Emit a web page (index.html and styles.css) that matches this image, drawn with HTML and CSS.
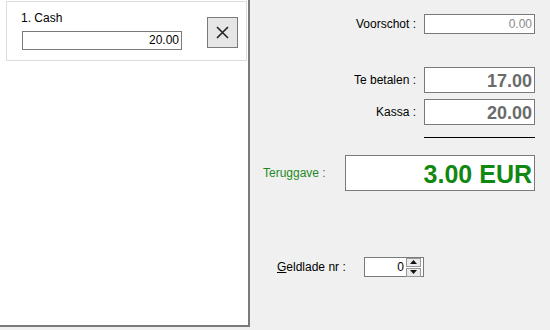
FILE: index.html
```html
<!DOCTYPE html>
<html lang="nl">
<head>
<meta charset="UTF-8">
<title>Afrekenen</title>
<link rel="stylesheet" href="styles.css">
</head>
<body>

<div class="screen">
    <div class="payments">
        <div class="pay-card">
            <div class="pay-left">
                <div class="pay-name">1. Cash</div>
                <div class="pay-amount">20.00</div>
            </div>
            <div class="pay-remove">
                <svg width="13" height="13" viewBox="0 0 13 13">
                    <path d="M1 1 L12 12 M12 1 L1 12" stroke="#222" stroke-width="1.6" fill="none"/>
                </svg>
            </div>
        </div>
    </div>

    <div class="totals">
        <div class="row row-advance">
            <span class="label">Voorschot :</span>
            <div class="box box-small">0.00</div>
        </div>
        <div class="row row-due">
            <span class="label">Te betalen :</span>
            <div class="box box-big">17.00</div>
        </div>
        <div class="row row-cash">
            <span class="label">Kassa :</span>
            <div class="box box-big">20.00</div>
        </div>
        <div class="rule"></div>
        <div class="row row-change">
            <span class="label label-green">Teruggave :</span>
            <div class="box box-change">3.00 EUR</div>
        </div>
        <div class="row row-drawer">
            <span class="label"><u>G</u>eldlade nr :</span>
            <div class="spin">
                <span class="spin-value">0</span>
                <div class="spin-buttons">
                    <div class="spin-btn">
                        <svg width="7" height="4" viewBox="0 0 7 4"><path d="M0 4 L3.5 0 L7 4 Z" fill="#111"/></svg>
                    </div>
                    <div class="spin-btn">
                        <svg width="7" height="4" viewBox="0 0 7 4"><path d="M0 0 L3.5 4 L7 0 Z" fill="#111"/></svg>
                    </div>
                </div>
            </div>
        </div>
    </div>
</div>

</body>
</html>
```

FILE: styles.css
```css
body, html {
    margin: 0;
    padding: 0;
    background: #f0f0f0;
    font-family: "Liberation Sans", Arial, sans-serif;
    font-size: 12px;
    color: #000;
}

.screen {
    display: flex;
    width: 550px;
    height: 330px;
}

.payments {
    width: 242px;
    height: 324px;
    background: #fff;
    border-right: 2px solid #7a7a7a;
    border-bottom: 2px solid #7a7a7a;
    padding: 1px 0 0 6px;
    box-sizing: content-box;
}

.pay-card {
    display: flex;
    justify-content: space-between;
    height: 58px;
    margin-right: 1px;
    border: 1px solid #dcdcdc;
    background: #fff;
    padding: 0 8px 0 14px;
}

.pay-left {
    padding-top: 9px;
}

.pay-name {
    height: 20px;
}

.pay-amount {
    width: 156px;
    height: 17px;
    line-height: 17px;
    margin-left: 1px;
    border: 1px solid #7a7a7a;
    text-align: right;
    padding-right: 2px;
}

.pay-remove {
    margin-top: 15px;
    width: 29px;
    height: 29px;
    border: 1px solid #7a7a7a;
    background: #e6e6e6;
    display: flex;
    align-items: center;
    justify-content: center;
}

.totals {
    flex: 1;
    display: flex;
    flex-direction: column;
    padding-top: 14px;
}

.row {
    display: flex;
    align-items: center;
    justify-content: flex-end;
    padding-right: 15px;
}

.label {
    margin-right: 8px;
    color: #000;
}

.label-green {
    color: #1f8a1f;
    margin-right: 0;
}

.box {
    width: 107px;
    border: 1px solid #7a7a7a;
    background: #fff;
    text-align: right;
    padding-right: 2px;
    box-sizing: content-box;
}

.box-small {
    height: 18px;
    line-height: 18px;
    color: #8a8a8a;
}

.box-big {
    height: 24px;
    line-height: 26px;
    font-size: 18px;
    font-weight: bold;
    color: #6b6b6b;
}

.row-due {
    margin-top: 33px;
}

.row-cash {
    margin-top: 6px;
}

.rule {
    width: 111px;
    height: 1px;
    border-top: 1px solid #000;
    margin: 12px 15px 0 auto;
}

.row-change {
    margin-top: 16px;
    justify-content: space-between;
    padding-left: 13px;
}

.box-change {
    width: 186px;
    height: 34px;
    line-height: 36px;
    font-size: 25px;
    font-weight: bold;
    color: #118811;
    padding-right: 2px;
}

.row-drawer {
    margin-top: 66px;
    justify-content: flex-start;
    padding-left: 27px;
}

.row-drawer .label {
    margin-right: 0;
    width: 87px;
}

.spin {
    display: flex;
    align-items: center;
    width: 58px;
    height: 18px;
    border: 1px solid #7a7a7a;
    background: #fff;
}

.spin-value {
    flex: 1;
    text-align: right;
    padding-right: 2px;
}

.spin-buttons {
    display: flex;
    flex-direction: column;
    gap: 1px;
    margin-right: 2px;
}

.spin-btn {
    width: 13px;
    height: 7px;
    border: 1px solid #999;
    background: #eaeaea;
    display: flex;
    align-items: center;
    justify-content: center;
}
```
